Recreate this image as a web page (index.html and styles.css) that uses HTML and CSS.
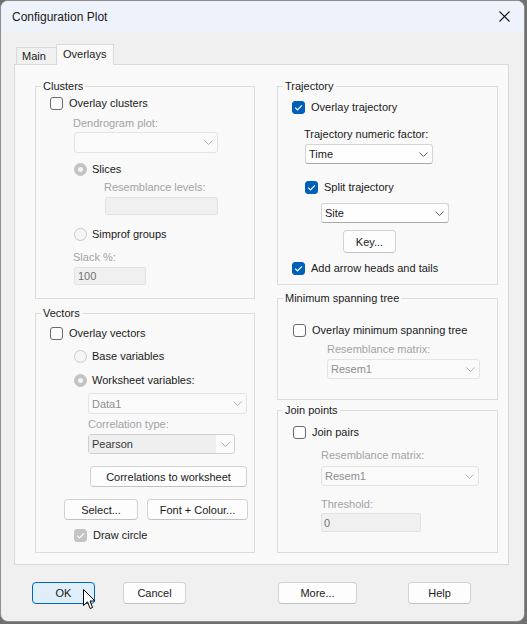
FILE: index.html
```html
<!DOCTYPE html>
<html>
<head>
<meta charset="utf-8">
<title>Configuration Plot</title>
<link rel="stylesheet" href="styles.css">
</head>
<body>
<div class="window">
  <div class="titlebar">
    <span class="title">Configuration Plot</span>
    <svg class="close" width="11" height="11" viewBox="0 0 11 11"><path d="M0.5 0.5 L10.5 10.5 M10.5 0.5 L0.5 10.5" stroke="#1a1a1a" stroke-width="1.1" fill="none"/></svg>
  </div>

  <div class="tabs">
    <div class="tab">Main</div>
    <div class="tab active">Overlays</div>
  </div>

  <div class="panel">
    <div class="col col-left">
      <fieldset class="group g-clusters">
        <legend>Clusters</legend>
        <div class="check mt-2 ml-14"><span class="box"></span>Overlay clusters</div>
        <div class="lbl dis mt-6 ml-37">Dendrogram plot:</div>
        <div class="combo dis mt-2 ml-38 w-144 h-21"><span class="val"></span><svg class="chev" width="9" height="5" viewBox="0 0 9 5"><path d="M0.5 0.5 L4.5 4.5 L8.5 0.5" stroke="#b4b4b4" fill="none"/></svg></div>
        <div class="check mt-9 ml-38"><span class="radio dot"></span>Slices</div>
        <div class="lbl dis mt-4 ml-68">Resemblance levels:</div>
        <div class="field mt-3 ml-69 w-113 h-18"></div>
        <div class="check mt-12 ml-38"><span class="radio"></span>Simprof groups</div>
        <div class="lbl dis mt-9 ml-37">Slack %:</div>
        <div class="field mt-3 ml-38 w-72 h-18">100</div>
      </fieldset>

      <fieldset class="group g-vectors">
        <legend>Vectors</legend>
        <div class="check mt-5 ml-14"><span class="box"></span>Overlay vectors</div>
        <div class="check mt-9 ml-38"><span class="radio"></span>Base variables</div>
        <div class="check mt-10 ml-38"><span class="radio dot"></span>Worksheet variables:</div>
        <div class="combo dis mt-6 ml-52 w-159 h-21"><span class="val">Data1</span><svg class="chev" width="9" height="5" viewBox="0 0 9 5"><path d="M0.5 0.5 L4.5 4.5 L8.5 0.5" stroke="#b4b4b4" fill="none"/></svg></div>
        <div class="lbl dis mt-3 ml-52">Correlation type:</div>
        <div class="combo pearson mt-3 ml-52 w-147 h-20"><span class="sel">Pearson</span><svg class="chev" width="9" height="5" viewBox="0 0 9 5"><path d="M0.5 0.5 L4.5 4.5 L8.5 0.5" stroke="#a8a8a8" fill="none"/></svg></div>
        <div class="btn mt-12 ml-54 w-157 h-21">Correlations to worksheet</div>
        <div class="btn-row mt-12 ml-28">
          <div class="btn w-74 h-21">Select...</div>
          <div class="btn w-101 h-21">Font + Colour...</div>
        </div>
        <div class="check mt-8 ml-38"><span class="box on dis-on"><svg width="13" height="13" viewBox="0 0 13 13"><path d="M3.2 6.6 L5.5 8.9 L9.9 4.3" stroke="#fff" stroke-width="1.2" fill="none"/></svg></span>Draw circle</div>
      </fieldset>
    </div>

    <div class="col col-right">
      <fieldset class="group g-traj">
        <legend>Trajectory</legend>
        <div class="check mt-6 ml-14"><span class="box on"><svg width="13" height="13" viewBox="0 0 13 13"><path d="M3.2 6.6 L5.5 8.9 L9.9 4.3" stroke="#fff" stroke-width="1.2" fill="none"/></svg></span>Overlay trajectory</div>
        <div class="lbl mt-13 ml-26">Trajectory numeric factor:</div>
        <div class="combo en mt-3 ml-27 w-128 h-20"><span class="val">Time</span><svg class="chev" width="9" height="5" viewBox="0 0 9 5"><path d="M0.5 0.5 L4.5 4.5 L8.5 0.5" stroke="#5a5a5a" fill="none"/></svg></div>
        <div class="check mt-16 ml-27"><span class="box on"><svg width="13" height="13" viewBox="0 0 13 13"><path d="M3.2 6.6 L5.5 8.9 L9.9 4.3" stroke="#fff" stroke-width="1.2" fill="none"/></svg></span>Split trajectory</div>
        <div class="combo en mt-9 ml-43 w-128 h-20"><span class="val">Site</span><svg class="chev" width="9" height="5" viewBox="0 0 9 5"><path d="M0.5 0.5 L4.5 4.5 L8.5 0.5" stroke="#5a5a5a" fill="none"/></svg></div>
        <div class="btn mt-7 ml-65 w-53 h-23">Key...</div>
        <div class="check mt-8 ml-14"><span class="box on"><svg width="13" height="13" viewBox="0 0 13 13"><path d="M3.2 6.6 L5.5 8.9 L9.9 4.3" stroke="#fff" stroke-width="1.2" fill="none"/></svg></span>Add arrow heads and tails</div>
      </fieldset>

      <fieldset class="group g-mst">
        <legend>Minimum spanning tree</legend>
        <div class="check mt-17 ml-15"><span class="box"></span>Overlay minimum spanning tree</div>
        <div class="lbl dis mt-5 ml-49">Resemblance matrix:</div>
        <div class="combo dis mt-3 ml-49 w-153 h-20"><span class="val">Resem1</span><svg class="chev" width="9" height="5" viewBox="0 0 9 5"><path d="M0.5 0.5 L4.5 4.5 L8.5 0.5" stroke="#b4b4b4" fill="none"/></svg></div>
      </fieldset>

      <fieldset class="group g-join">
        <legend>Join points</legend>
        <div class="check mt-7 ml-15"><span class="box"></span>Join pairs</div>
        <div class="lbl dis mt-9 ml-43">Resemblance matrix:</div>
        <div class="combo dis mt-4 ml-43 w-158 h-20"><span class="val">Resem1</span><svg class="chev" width="9" height="5" viewBox="0 0 9 5"><path d="M0.5 0.5 L4.5 4.5 L8.5 0.5" stroke="#b4b4b4" fill="none"/></svg></div>
        <div class="lbl dis mt-11 ml-43">Threshold:</div>
        <div class="field mt-2 ml-43 w-100 h-19">0</div>
      </fieldset>
    </div>
  </div>

  <div class="footer">
    <div class="btn default b-ok">OK</div>
    <div class="btn b-cancel">Cancel</div>
    <div class="btn b-more">More...</div>
    <div class="btn b-help">Help</div>
  </div>

  <svg class="cursor" width="13" height="21" viewBox="0 0 13 21"><path d="M0.5 0.5 V16.5 L4.5 12.8 L7.2 19.5 L9.6 18.5 L7 12 H12 Z" fill="#fff" stroke="#000" stroke-width="1" stroke-linejoin="miter"/></svg>
</div>
</body>
</html>
```

FILE: styles.css
```css
* { box-sizing: border-box; }

body {
  margin: 0;
  background: #707070;
  font-family: "Liberation Sans", Arial, sans-serif;
  font-size: 11px;
  color: #1a1a1a;
}

.window {
  position: relative;
  width: 525px;
  height: 622px;
  border: 1px solid #8e8e8e;
  border-radius: 8px;
  background: #f0f0f0;
  overflow: hidden;
}

.titlebar {
  height: 31px;
  background: #eef2fb;
  display: flex;
  align-items: center;
  padding-left: 11px;
}
.title { font-size: 12px; color: #1a1a1a; }
.close { margin-left: auto; margin-right: 14px; }

.tabs {
  margin-top: 12px;
  height: 20px;
  display: flex;
  align-items: flex-end;
  padding-left: 15px;
}
.tab {
  height: 17px;
  width: 41px;
  border: 1px solid #d9d9d9;
  border-bottom: none;
  background: #f0f0f0;
  padding-left: 5px;
  line-height: 16px;
  white-space: nowrap;
}
.tab.active {
  position: relative;
  z-index: 1;
  height: 21px;
  width: 58px;
  margin-left: -1px;
  margin-bottom: -1px;
  padding-left: 6px;
  line-height: 18px;
  background: #f9f9f9;
}

.panel {
  margin-left: 13px;
  width: 495px;
  height: 501px;
  border: 1px solid #d9d9d9;
  background: #f9f9f9;
  padding: 14px 0 0 20px;
  display: flex;
  gap: 22px;
}
.col { display: flex; flex-direction: column; }
.col-left { width: 220px; }
.col-right { width: 221px; }

.group {
  margin: 0;
  padding: 0;
  border: 1px solid #dcdcdc;
  min-width: 0;
}
.group legend {
  padding: 0 2px;
  margin-left: 5px;
  height: 15px;
  line-height: 15px;
  color: #1a1a1a;
}
.g-clusters { height: 220px; }
.g-vectors { height: 247px; margin-top: 7px; }
.g-traj { height: 206px; }
.g-mst { height: 109px; margin-top: 6px; }
.g-join { height: 150px; margin-top: 3px; }

.check {
  display: flex;
  align-items: center;
  height: 14px;
  white-space: nowrap;
  color: #1a1a1a;
}
.box {
  flex: none;
  width: 13px;
  height: 13px;
  border: 1px solid #6a6a6a;
  border-radius: 3px;
  background: #fdfdfd;
  margin-right: 6px;
  position: relative;
}
.box svg { position: absolute; left: -1px; top: -1px; }
.box.on { background: #005fb8; border-color: #005fb8; }
.box.dis-on { background: #c4c4c4; border-color: #c4c4c4; }

.radio {
  flex: none;
  width: 13px;
  height: 13px;
  border: 1px solid #c8c8c8;
  border-radius: 50%;
  background: #f6f6f6;
  margin-right: 5px;
  display: flex;
  align-items: center;
  justify-content: center;
}
.radio.dot { background: #c3c3c3; border-color: #c3c3c3; }
.radio.dot::after {
  content: "";
  width: 5px;
  height: 5px;
  border-radius: 50%;
  background: #f4f4f4;
}

.lbl { height: 14px; line-height: 14px; white-space: nowrap; color: #1a1a1a; }
.lbl.dis { color: #a3a3a3; }

.combo {
  display: flex;
  align-items: center;
  border: 1px solid #e4e4e4;
  border-radius: 3px;
  background: #fafafa;
  padding-left: 3px;
}
.combo .val { flex: 1; white-space: nowrap; }
.combo .chev { flex: none; margin-right: 4px; }
.combo.dis { color: #8e8e8e; }
.combo.en {
  background: #fefefe;
  border-color: #d4d4d4;
  border-bottom-color: #a8a8a8;
  color: #1a1a1a;
}
.combo.pearson {
  padding-left: 0;
  border-color: #cfcfcf;
  color: #3a3a3a;
  background: #fbfbfb;
}
.combo.pearson .sel {
  width: 127px;
  height: 18px;
  line-height: 18px;
  padding-left: 3px;
  background: #efefef;
  margin-right: auto;
}

.field {
  border: 1px solid #e2e2e2;
  border-radius: 2px;
  background: #f0f0f0;
  color: #707070;
  padding-left: 3px;
  display: flex;
  align-items: center;
}
.g-join .field { padding-left: 2px; }

.btn {
  display: flex;
  align-items: center;
  justify-content: center;
  border: 1px solid #d2d2d2;
  border-bottom-color: #c2c2c2;
  border-radius: 4px;
  background: #fdfdfd;
  color: #1a1a1a;
  white-space: nowrap;
}
.btn-row { display: flex; gap: 9px; }

.footer {
  margin-top: 17px;
  padding-left: 31px;
  display: flex;
}
.footer .btn { height: 22px; }
.b-ok { width: 63px; }
.b-cancel { width: 63px; margin-left: 28px; }
.b-more { width: 79px; margin-left: 92px; }
.b-help { width: 63px; margin-left: 51px; }
.btn.default {
  background: #e0eef9;
  border: 1px solid #0067c0;
}

.cursor { position: absolute; left: 82px; top: 588px; }

.mt-2 { margin-top: 2px; }
.mt-3 { margin-top: 3px; }
.mt-4 { margin-top: 4px; }
.mt-5 { margin-top: 5px; }
.mt-6 { margin-top: 6px; }
.mt-7 { margin-top: 7px; }
.mt-8 { margin-top: 8px; }
.mt-9 { margin-top: 9px; }
.mt-10 { margin-top: 10px; }
.mt-11 { margin-top: 11px; }
.mt-12 { margin-top: 12px; }
.mt-13 { margin-top: 13px; }
.mt-16 { margin-top: 16px; }
.mt-17 { margin-top: 17px; }

.ml-14 { margin-left: 14px; }
.ml-15 { margin-left: 15px; }
.ml-26 { margin-left: 26px; }
.ml-27 { margin-left: 27px; }
.ml-28 { margin-left: 28px; }
.ml-37 { margin-left: 37px; }
.ml-38 { margin-left: 38px; }
.ml-43 { margin-left: 43px; }
.ml-49 { margin-left: 49px; }
.ml-52 { margin-left: 52px; }
.ml-54 { margin-left: 54px; }
.ml-65 { margin-left: 65px; }
.ml-68 { margin-left: 68px; }
.ml-69 { margin-left: 69px; }

.w-53 { width: 53px; }
.w-72 { width: 72px; }
.w-74 { width: 74px; }
.w-100 { width: 100px; }
.w-101 { width: 101px; }
.w-113 { width: 113px; }
.w-128 { width: 128px; }
.w-144 { width: 144px; }
.w-147 { width: 147px; }
.w-153 { width: 153px; }
.w-157 { width: 157px; }
.w-158 { width: 158px; }
.w-159 { width: 159px; }

.h-18 { height: 18px; }
.h-19 { height: 19px; }
.h-20 { height: 20px; }
.h-21 { height: 21px; }
.h-23 { height: 23px; }
```
